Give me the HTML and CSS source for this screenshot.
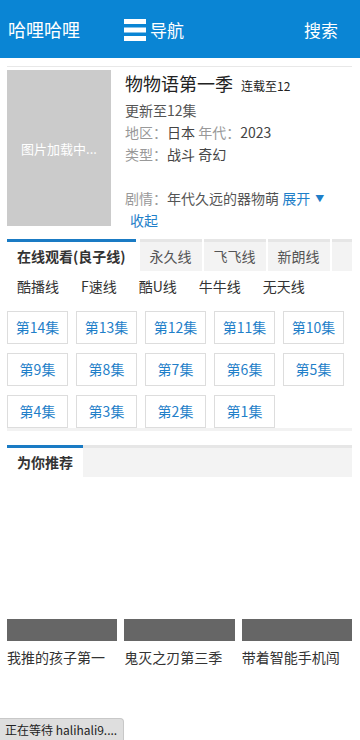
FILE: index.html
```html
<!DOCTYPE html>
<html lang="zh-CN">
<head>
    <meta charset="UTF-8">
    <meta name="viewport" content="width=device-width, initial-scale=1.0">
    <title>物物语第一季 - 哈哩哈哩</title>
    <link rel="stylesheet" href="styles.css">
</head>
<body>
    <header class="header">
        <div class="logo">哈哩哈哩</div>
        <div class="nav">
            <svg class="nav-icon" width="22" height="22" viewBox="0 0 22 22">
                <rect x="0" y="0" width="22" height="5" fill="#fff"/>
                <rect x="0" y="8.5" width="22" height="5" fill="#fff"/>
                <rect x="0" y="17" width="22" height="5" fill="#fff"/>
            </svg>
            <span>导航</span>
        </div>
        <div class="search">搜索</div>
    </header>

    <div class="container">
        <div class="info">
            <div class="poster">图片加载中...</div>
            <div class="detail">
                <h1 class="title">物物语第一季 <small>连载至12</small></h1>
                <p class="line update">更新至12集</p>
                <p class="line"><span class="label">地区：</span>日本 <span class="label">年代：</span>2023</p>
                <p class="line"><span class="label">类型：</span>战斗 奇幻</p>
                <p class="line"></p>
                <p class="line desc"><span class="label">剧情：</span>年代久远的器物萌 <a class="more">展开 <span class="arrow">▼</span></a></p>
                <p class="line"><a class="fold">收起</a></p>
            </div>
        </div>

        <div class="tabs">
            <div class="tab active">在线观看(良子线)</div>
            <div class="tab">永久线</div>
            <div class="tab">飞飞线</div>
            <div class="tab">新朗线</div>
            <div class="tab filler"></div>
        </div>
        <div class="sources">
            <span>酷播线</span>
            <span>F速线</span>
            <span>酷U线</span>
            <span>牛牛线</span>
            <span>无天线</span>
        </div>

        <div class="episodes">
            <a>第14集</a><a>第13集</a><a>第12集</a><a>第11集</a><a>第10集</a>
            <a>第9集</a><a>第8集</a><a>第7集</a><a>第6集</a><a>第5集</a>
            <a>第4集</a><a>第3集</a><a>第2集</a><a>第1集</a>
        </div>

        <div class="tabs section-head">
            <div class="tab active">为你推荐</div>
            <div class="tab filler"></div>
        </div>

        <div class="recommend">
            <div class="card">
                <div class="thumb"><div class="thumb-bar"></div></div>
                <div class="card-title">我推的孩子第一</div>
            </div>
            <div class="card">
                <div class="thumb"><div class="thumb-bar"></div></div>
                <div class="card-title">鬼灭之刃第三季</div>
            </div>
            <div class="card">
                <div class="thumb"><div class="thumb-bar"></div></div>
                <div class="card-title">带着智能手机闯</div>
            </div>
        </div>
    </div>

    <div class="status">正在等待 halihali9....</div>
</body>
</html>
```

FILE: styles.css
```css
body {
    margin: 0;
    background: #fff;
    font-family: "Noto Sans CJK SC", "Noto Sans", sans-serif;
    color: #333;
    font-size: 14px;
}
a {
    cursor: pointer;
}
.header {
    height: 58px;
    background-color: #0a85d4;
    color: #fff;
    display: flex;
    align-items: center;
    padding: 0 22px 0 8px;
}
.logo {
    font-size: 18px;
    width: 116px;
}
.nav {
    display: flex;
    align-items: center;
    gap: 4px;
    font-size: 17px;
}
.nav-icon {
    display: block;
    margin-top: 2px;
}
.search {
    margin-left: auto;
    font-size: 17px;
}
.container {
    margin: 0 8px 0 7px;
}
.info {
    margin-top: 8px;
    border-top: 1px solid #e8e8e8;
    padding-top: 3px;
    display: flex;
    gap: 14px;
}
.poster {
    width: 104px;
    height: 156px;
    flex-shrink: 0;
    background-color: #cbcbcb;
    color: #fff;
    font-size: 13px;
    display: flex;
    align-items: center;
    justify-content: center;
}
.detail {
    flex: 1;
    min-width: 0;
}
.title {
    margin: 0;
    font-size: 18px;
    font-weight: normal;
    line-height: 26px;
    color: #222;
}
.title small {
    font-size: 12px;
    margin-left: 4px;
    color: #222;
}
.line {
    margin: 0;
    height: 22px;
    line-height: 22px;
    white-space: nowrap;
    color: #444;
}
.update {
    color: #555;
}
.label {
    color: #999;
}
.desc {
    color: #555;
}
.more, .fold {
    color: #1f7fc9;
}
.arrow {
    font-size: 9px;
    vertical-align: 2px;
    margin-left: 2px;
}
.fold {
    padding-left: 5px;
}
.tabs {
    margin-top: 8px;
    display: flex;
    overflow: hidden;
}
.tab {
    height: 29px;
    line-height: 29px;
    padding: 0 10px;
    margin-right: 2px;
    background-color: #f3f3f3;
    border-top: 3px solid #e6e6e6;
    white-space: nowrap;
    color: #555;
}
.tab.active {
    background-color: #fff;
    border-top-color: #1a7bc4;
    font-weight: bold;
    color: #333;
    margin-right: 4px;
}
.tab.filler {
    flex: 1;
    padding: 0;
    margin-right: 0;
}
.sources {
    display: flex;
    height: 30px;
    line-height: 30px;
}
.sources span {
    padding: 0 10px;
    margin-right: 2px;
}
.episodes {
    margin-top: 10px;
    display: grid;
    grid-template-columns: repeat(5, 61px);
    column-gap: 8px;
    row-gap: 9px;
    border-bottom: 3px solid #f2f2f2;
}
.episodes a {
    height: 31px;
    line-height: 31px;
    border: 1px solid #ddd;
    text-align: center;
    color: #1f7fc9;
}
.section-head {
    margin-top: 14px;
}
.section-head .tab.active {
    margin-right: 0;
}
.recommend {
    margin-top: 8px;
    display: grid;
    grid-template-columns: repeat(3, 1fr);
    gap: 7px;
}
.card {
    min-width: 0;
}
.thumb {
    height: 156px;
    display: flex;
    align-items: flex-end;
}
.thumb-bar {
    width: 100%;
    height: 22px;
    background-color: #666;
}
.card-title {
    line-height: 32px;
    white-space: nowrap;
    overflow: hidden;
    color: #333;
}
.status {
    position: fixed;
    left: 0;
    bottom: 0;
    height: 21px;
    line-height: 21px;
    padding: 0 6px 0 5px;
    font-size: 12px;
    background-color: #dedede;
    border: 1px solid #c8c8c8;
    border-left: none;
    border-bottom: none;
    border-top-right-radius: 4px;
    color: #222;
}
```
